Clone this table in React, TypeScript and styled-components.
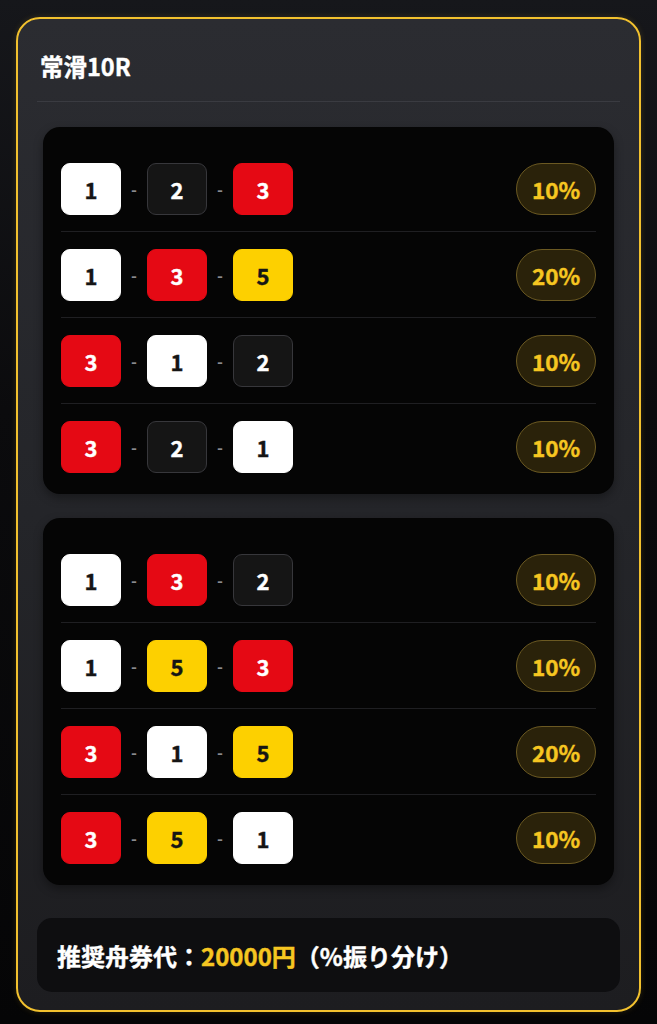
import React from "react";
import styled, { createGlobalStyle } from "styled-components";

const GlobalStyle = createGlobalStyle`
  html, body {
    margin: 0;
    padding: 0;
    background: linear-gradient(180deg, #16171b 0%, #0b0b0d 40%, #050506 100%);
    min-height: 100%;
  }
  body {
    font-family: "Noto Sans CJK JP", "Noto Sans", sans-serif;
    color: #fff;
  }
`;

const Page = styled.div`
  padding: 17px 16px 11px 16px;
  min-height: 1024px;
  box-sizing: border-box;
`;

const Card = styled.section`
  border: 2.5px solid #f2c12e;
  border-radius: 24px;
  background: linear-gradient(180deg, #2b2c31 0%, #242529 50%, #1d1d20 100%);
  padding: 0 19px 18px 19px;
  box-shadow: 0 0 6px rgba(242, 193, 46, 0.15);
`;

const Header = styled.h2`
  margin: 0;
  padding: 32px 3px 20px 3px;
  font-size: 23.5px;
  line-height: 30px;
  font-weight: 700;
  -webkit-text-stroke: 0.4px #fff;
  color: #fff;
  border-bottom: 1px solid #3a3b41;
`;

const Group = styled.div<{ $first?: boolean }>`
  margin: ${(p) => (p.$first ? "25px" : "24px")} 6px 0 6px;
  padding: 19px 18px 5px 18px;
  background: #050505;
  border-radius: 17px;
  box-shadow: 0 4px 10px rgba(0, 0, 0, 0.35);
`;

const Row = styled.div<{ $first?: boolean }>`
  display: flex;
  align-items: center;
  justify-content: space-between;
  padding: 17px 0 16px 0;
  border-top: ${(p) => (p.$first ? "none" : "1px solid #1f1f22")};
`;

const Combo = styled.div`
  display: flex;
  align-items: center;
`;

type BoatColor = "white" | "black" | "red" | "yellow";

const boatStyles: Record<BoatColor, { bg: string; fg: string; border: string }> = {
  white: { bg: "#ffffff", fg: "#151515", border: "#ffffff" },
  black: { bg: "#151515", fg: "#ffffff", border: "#37373b" },
  red: { bg: "#e50914", fg: "#ffffff", border: "#e50914" },
  yellow: { bg: "#fdd000", fg: "#151515", border: "#fdd000" },
};

const Boat = styled.div<{ $c: BoatColor }>`
  width: 60px;
  height: 52px;
  box-sizing: border-box;
  border-radius: 9px;
  display: flex;
  align-items: center;
  justify-content: center;
  font-family: "Noto Sans CJK JP", "Noto Sans", sans-serif;
  font-weight: 700;
  font-size: 22px;
  -webkit-text-stroke: 0.4px ${(p) => boatStyles[p.$c].fg};
  background: ${(p) => boatStyles[p.$c].bg};
  color: ${(p) => boatStyles[p.$c].fg};
  border: 1.5px solid ${(p) => boatStyles[p.$c].border};
`;

const Dash = styled.span`
  width: 26px;
  display: flex;
  align-items: center;
  justify-content: center;
  color: #8a8a8e;
  font-size: 16px;
  font-weight: 700;
`;

const Pill = styled.div`
  width: 80px;
  height: 52px;
  box-sizing: border-box;
  border-radius: 26px;
  background: #2a220a;
  border: 1px solid #6b5922;
  color: #f6c621;
  display: flex;
  align-items: center;
  justify-content: center;
  font-weight: 700;
  font-size: 22.5px;
  -webkit-text-stroke: 0.4px #f6c621;
  font-family: "Noto Sans CJK JP", "Noto Sans", sans-serif;
`;

const Footer = styled.div`
  margin-top: 33px;
  height: 74px;
  box-sizing: border-box;
  background: #0e0e10;
  border-radius: 15px;
  display: flex;
  align-items: center;
  padding: 0 20px;
  font-size: 24px;
  font-weight: 700;
  -webkit-text-stroke: 0.4px currentColor;
  color: #fff;
`;

const Amount = styled.span`
  color: #f6c621;
`;

const colorOf: Record<number, BoatColor> = {
  1: "white",
  2: "black",
  3: "red",
  5: "yellow",
};

type Bet = { combo: number[]; pct: string };

const groups: Bet[][] = [
  [
    { combo: [1, 2, 3], pct: "10%" },
    { combo: [1, 3, 5], pct: "20%" },
    { combo: [3, 1, 2], pct: "10%" },
    { combo: [3, 2, 1], pct: "10%" },
  ],
  [
    { combo: [1, 3, 2], pct: "10%" },
    { combo: [1, 5, 3], pct: "10%" },
    { combo: [3, 1, 5], pct: "20%" },
    { combo: [3, 5, 1], pct: "10%" },
  ],
];

export default function App() {
  return (
    <>
      <GlobalStyle />
      <Page>
        <Card>
          <Header>常滑10R</Header>
          {groups.map((g, gi) => (
            <Group key={gi} $first={gi === 0}>
              {g.map((bet, ri) => (
                <Row key={ri} $first={ri === 0}>
                  <Combo>
                    {bet.combo.map((n, i) => (
                      <React.Fragment key={i}>
                        {i > 0 && <Dash>-</Dash>}
                        <Boat $c={colorOf[n]}>{n}</Boat>
                      </React.Fragment>
                    ))}
                  </Combo>
                  <Pill>{bet.pct}</Pill>
                </Row>
              ))}
            </Group>
          ))}
          <Footer>
            推奨舟券代：<Amount>20000円</Amount>（%振り分け）
          </Footer>
        </Card>
      </Page>
    </>
  );
}
